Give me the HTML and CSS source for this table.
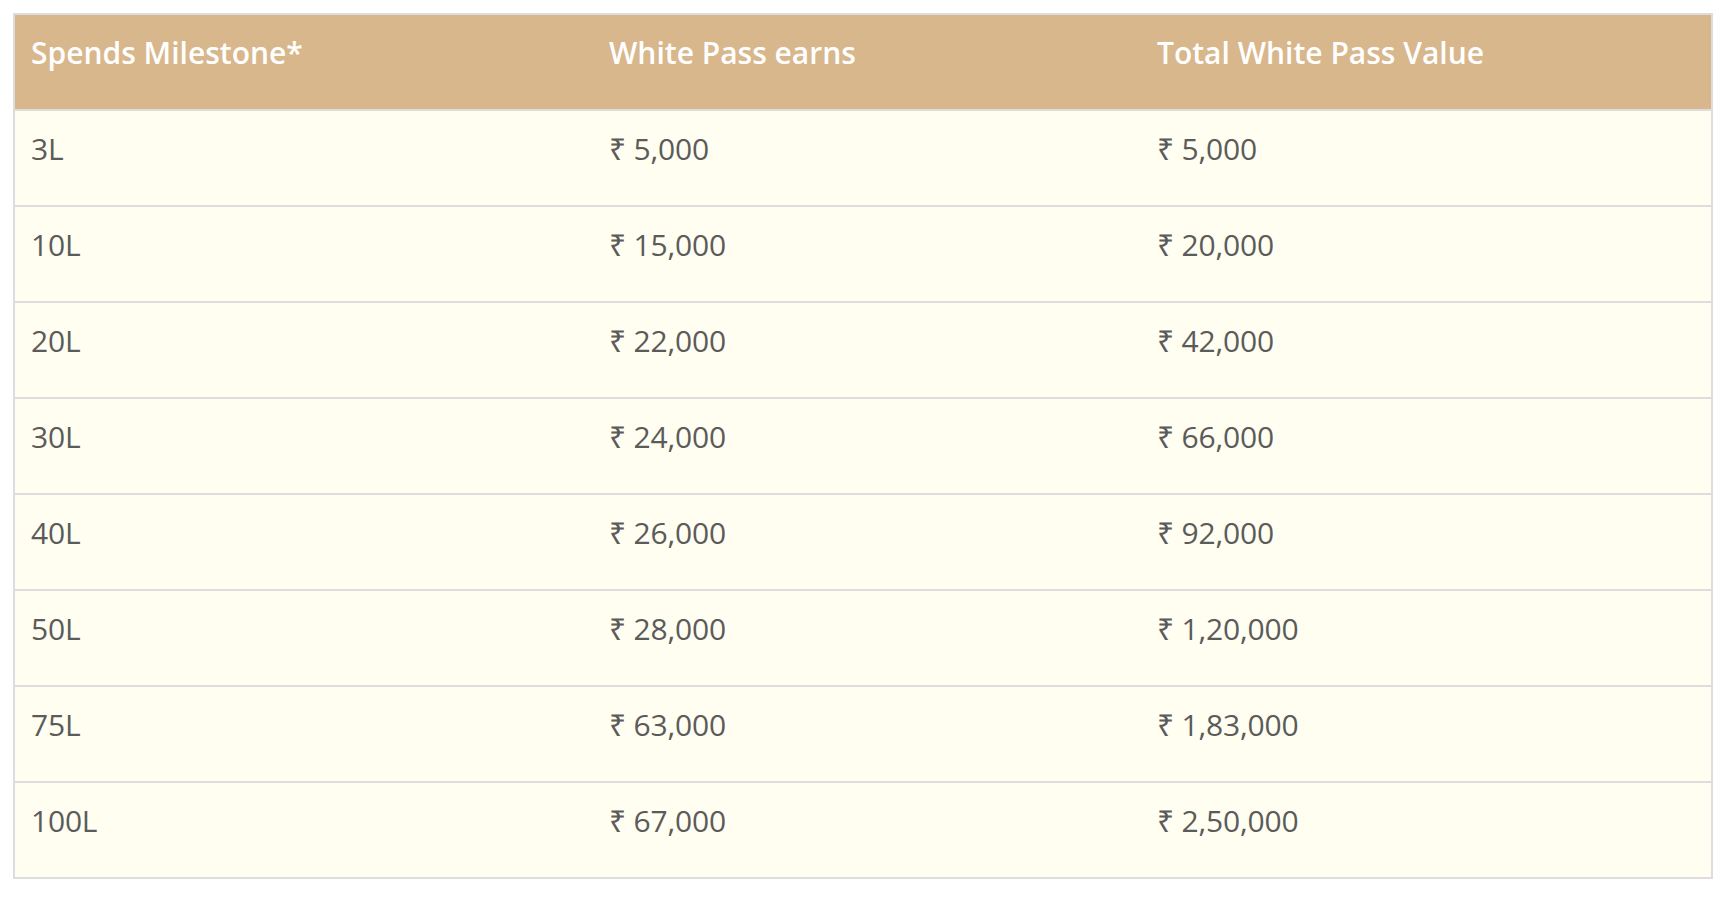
FILE: index.html
```html
<!DOCTYPE html>
<html lang="en">
<head>
<meta charset="utf-8">
<title>White Pass Milestones</title>
<link rel="stylesheet" href="styles.css">
</head>
<body>
<div class="wrap">
<table class="milestones">
  <colgroup>
    <col class="c1"><col class="c2"><col class="c3">
  </colgroup>
  <thead>
    <tr><th>Spends Milestone*</th><th>White Pass earns</th><th>Total White Pass Value</th></tr>
  </thead>
  <tbody>
    <tr><td>3L</td><td>₹ 5,000</td><td>₹ 5,000</td></tr>
    <tr><td>10L</td><td>₹ 15,000</td><td>₹ 20,000</td></tr>
    <tr><td>20L</td><td>₹ 22,000</td><td>₹ 42,000</td></tr>
    <tr><td>30L</td><td>₹ 24,000</td><td>₹ 66,000</td></tr>
    <tr><td>40L</td><td>₹ 26,000</td><td>₹ 92,000</td></tr>
    <tr><td>50L</td><td>₹ 28,000</td><td>₹ 1,20,000</td></tr>
    <tr><td>75L</td><td>₹ 63,000</td><td>₹ 1,83,000</td></tr>
    <tr><td>100L</td><td>₹ 67,000</td><td>₹ 2,50,000</td></tr>
  </tbody>
</table>
</div>
</body>
</html>
```

FILE: styles.css
```css
html, body {
  margin: 0;
  padding: 0;
  background: #ffffff;
}
.wrap {
  padding: 13px 0 0 13px;
}
.milestones {
  width: 1700px;
  border-collapse: collapse;
  table-layout: fixed;
  font-family: "Open Sans", "Noto Sans", sans-serif;
  font-size: 30px;
}
.c1 { width: 579px; }
.c2 { width: 548px; }
.milestones th,
.milestones td {
  border: 2px solid #dddddd;
  border-left: none;
  border-right: none;
  height: 96px;
  box-sizing: border-box;
  padding: 17px 16px 0 16px;
  vertical-align: top;
  text-align: left;
  line-height: 41px;
}
.milestones th:first-child,
.milestones td:first-child { border-left: 2px solid #dddddd; }
.milestones th:last-child,
.milestones td:last-child { border-right: 2px solid #dddddd; }
.milestones th {
  background: #d8b78c;
  color: #ffffff;
  font-weight: 600;
}
.milestones td {
  background: #fffef0;
  color: #5b5b5b;
  font-weight: 400;
  letter-spacing: -0.2px;
}
```
